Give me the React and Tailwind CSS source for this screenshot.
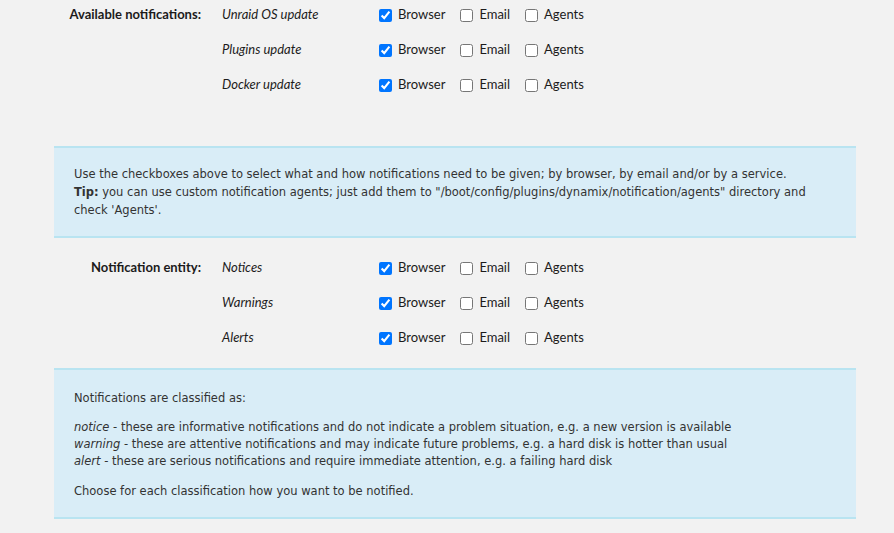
const groups = [
  {
    title: "Available notifications:",
    rows: ["Unraid OS update", "Plugins update", "Docker update"],
  },
  {
    title: "Notification entity:",
    rows: ["Notices", "Warnings", "Alerts"],
  },
];

const Option = ({ label, checked }) => (
  <label className="flex items-center gap-[6px] mr-[15px]">
    <input type="checkbox" defaultChecked={checked} className="m-0 w-[13px] h-[13px]" />
    <span>{label}</span>
  </label>
);

const Group = ({ title, rows }) => (
  <div className="flex flex-col gap-[5px]">
    {rows.map((row, i) => (
      <div key={row} className="flex items-center h-[30px]">
        <div className="w-[202px] pr-[1px] text-right font-bold text-[#1c1b1b]">
          {i === 0 ? title : ""}
        </div>
        <div className="w-[177px] pl-[20px] italic text-[#1c1b1b]">{row}</div>
        <div className="flex items-center text-[#1c1b1b]">
          <Option label="Browser" checked />
          <Option label="Email" />
          <Option label="Agents" />
        </div>
      </div>
    ))}
  </div>
);

export default function App() {
  return (
    <div className="min-h-screen bg-[#f2f2f2] text-[13px] font-['Lato',sans-serif] overflow-hidden">
      <Group {...groups[0]} />

      <div className="mt-[46px] ml-[54px] w-[802px] bg-[#d9edf7] border-y-2 border-[#b9e4f1] pt-[17px] pb-[17px] pl-5 pr-5 text-[11.5px] leading-[18px] text-[#333] font-['DejaVu_Sans',sans-serif]">
        Use the checkboxes above to select what and how notifications need to be given; by browser, by email and/or by a service.
        <br />
        <b>Tip:</b> you can use custom notification agents; just add them to "/boot/config/plugins/dynamix/notification/agents" directory and check 'Agents'.
      </div>

      <div className="mt-[15px]">
        <Group {...groups[1]} />
      </div>

      <div className="mt-[15px] ml-[54px] w-[802px] bg-[#d9edf7] border-y-2 border-[#b9e4f1] pt-[19px] pb-[17px] pl-5 pr-5 text-[11.5px] leading-[18px] text-[#333] font-['DejaVu_Sans',sans-serif]">
        <p>Notifications are classified as:</p>
        <p className="mt-[12px] leading-[17px]">
          <i>notice</i> - these are informative notifications and do not indicate a problem situation, e.g. a new version is available
          <br />
          <i>warning</i> - these are attentive notifications and may indicate future problems, e.g. a hard disk is hotter than usual
          <br />
          <i>alert</i> - these are serious notifications and require immediate attention, e.g. a failing hard disk
        </p>
        <p className="mt-[12px]">Choose for each classification how you want to be notified.</p>
      </div>
    </div>
  );
}
